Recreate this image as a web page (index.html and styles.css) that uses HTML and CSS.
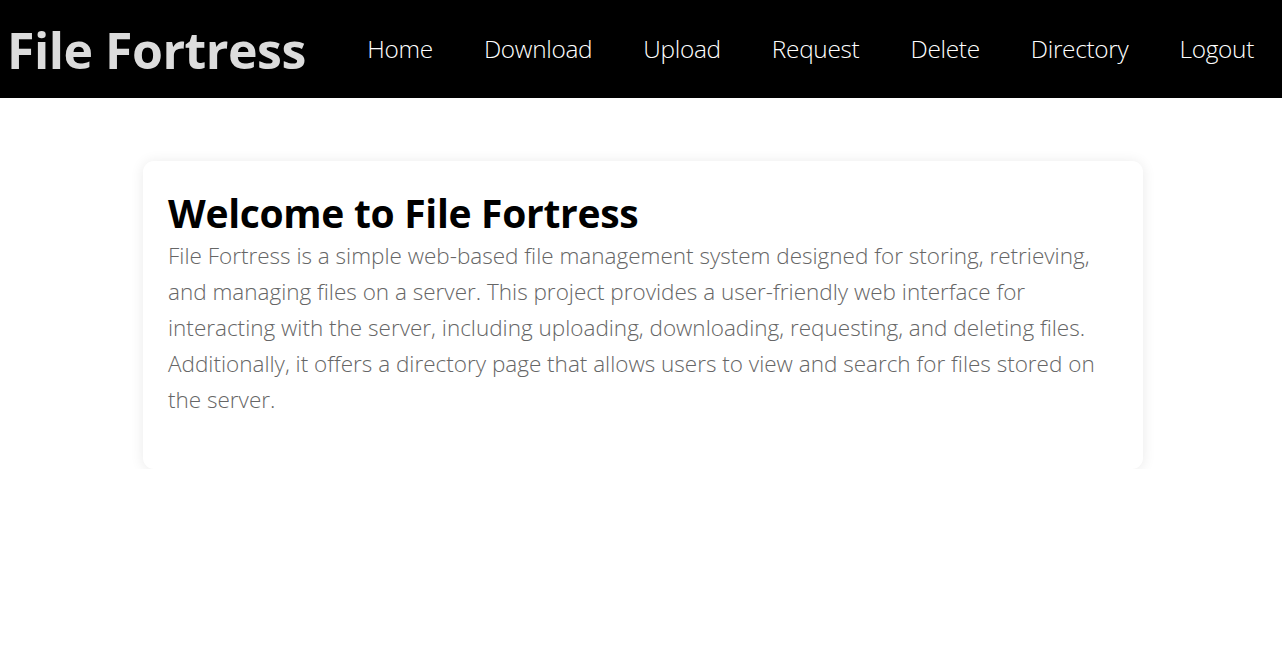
FILE: index.html
```html
<!DOCTYPE html>
<html lang="en">
<head>
<meta charset="utf-8">
<title>File Fortress</title>
<link rel="stylesheet" href="styles.css">
</head>
<body>
<header class="topbar">
  <div class="logo">File Fortress</div>
  <nav class="nav">
    <a class="nav-link" href="#">Home</a>
    <a class="nav-link" href="#">Download</a>
    <a class="nav-link" href="#">Upload</a>
    <a class="nav-link" href="#">Request</a>
    <a class="nav-link" href="#">Delete</a>
    <a class="nav-link" href="#">Directory</a>
    <a class="nav-link" href="#">Logout</a>
  </nav>
</header>
<main class="main">
  <section class="card">
    <h1 class="card-title">Welcome to File Fortress</h1>
    <p class="card-text">File Fortress is a simple web-based file management system designed for storing, retrieving, and managing files on a server. This project provides a user-friendly web interface for interacting with the server, including uploading, downloading, requesting, and deleting files. Additionally, it offers a directory page that allows users to view and search for files stored on the server.</p>
  </section>
</main>
</body>
</html>
```
FILE: styles.css
```css
* { box-sizing: border-box; }
html, body { margin: 0; padding: 0; background: #fff; }
body { font-family: "Open Sans", "Noto Sans", sans-serif; }
.topbar {
  height: 98px;
  background: #000;
  display: flex;
  align-items: center;
  justify-content: space-between;
  padding: 0 28px 0 7px;
}
.logo {
  color: #dcdcdc;
  font-weight: 700;
  font-size: 50px;
  letter-spacing: -0.5px;
  line-height: 1;
  margin-top: 1px;
}
.nav { display: flex; gap: 51px; }
.nav-link {
  color: #fff;
  text-decoration: none;
  font-size: 24.4px;
  font-weight: 300;
  letter-spacing: -0.3px;
  margin-top: -2px;
}
.main { display: flex; justify-content: center; padding: 63px 0 0 4px; }
.card {
  width: 1000px;
  background: #fff;
  border-radius: 11px;
  box-shadow: 0 1px 14px rgba(0,0,0,0.09);
  padding: 27px 25px 51px;
}
.card-title {
  margin: 0;
  font-size: 39px;
  font-weight: 700;
  color: #000;
  line-height: 50px;
  letter-spacing: -0.3px;
}
.card-text {
  margin: 0;
  font-size: 22.5px;
  font-weight: 300;
  color: #666;
  line-height: 36px;
}
```
